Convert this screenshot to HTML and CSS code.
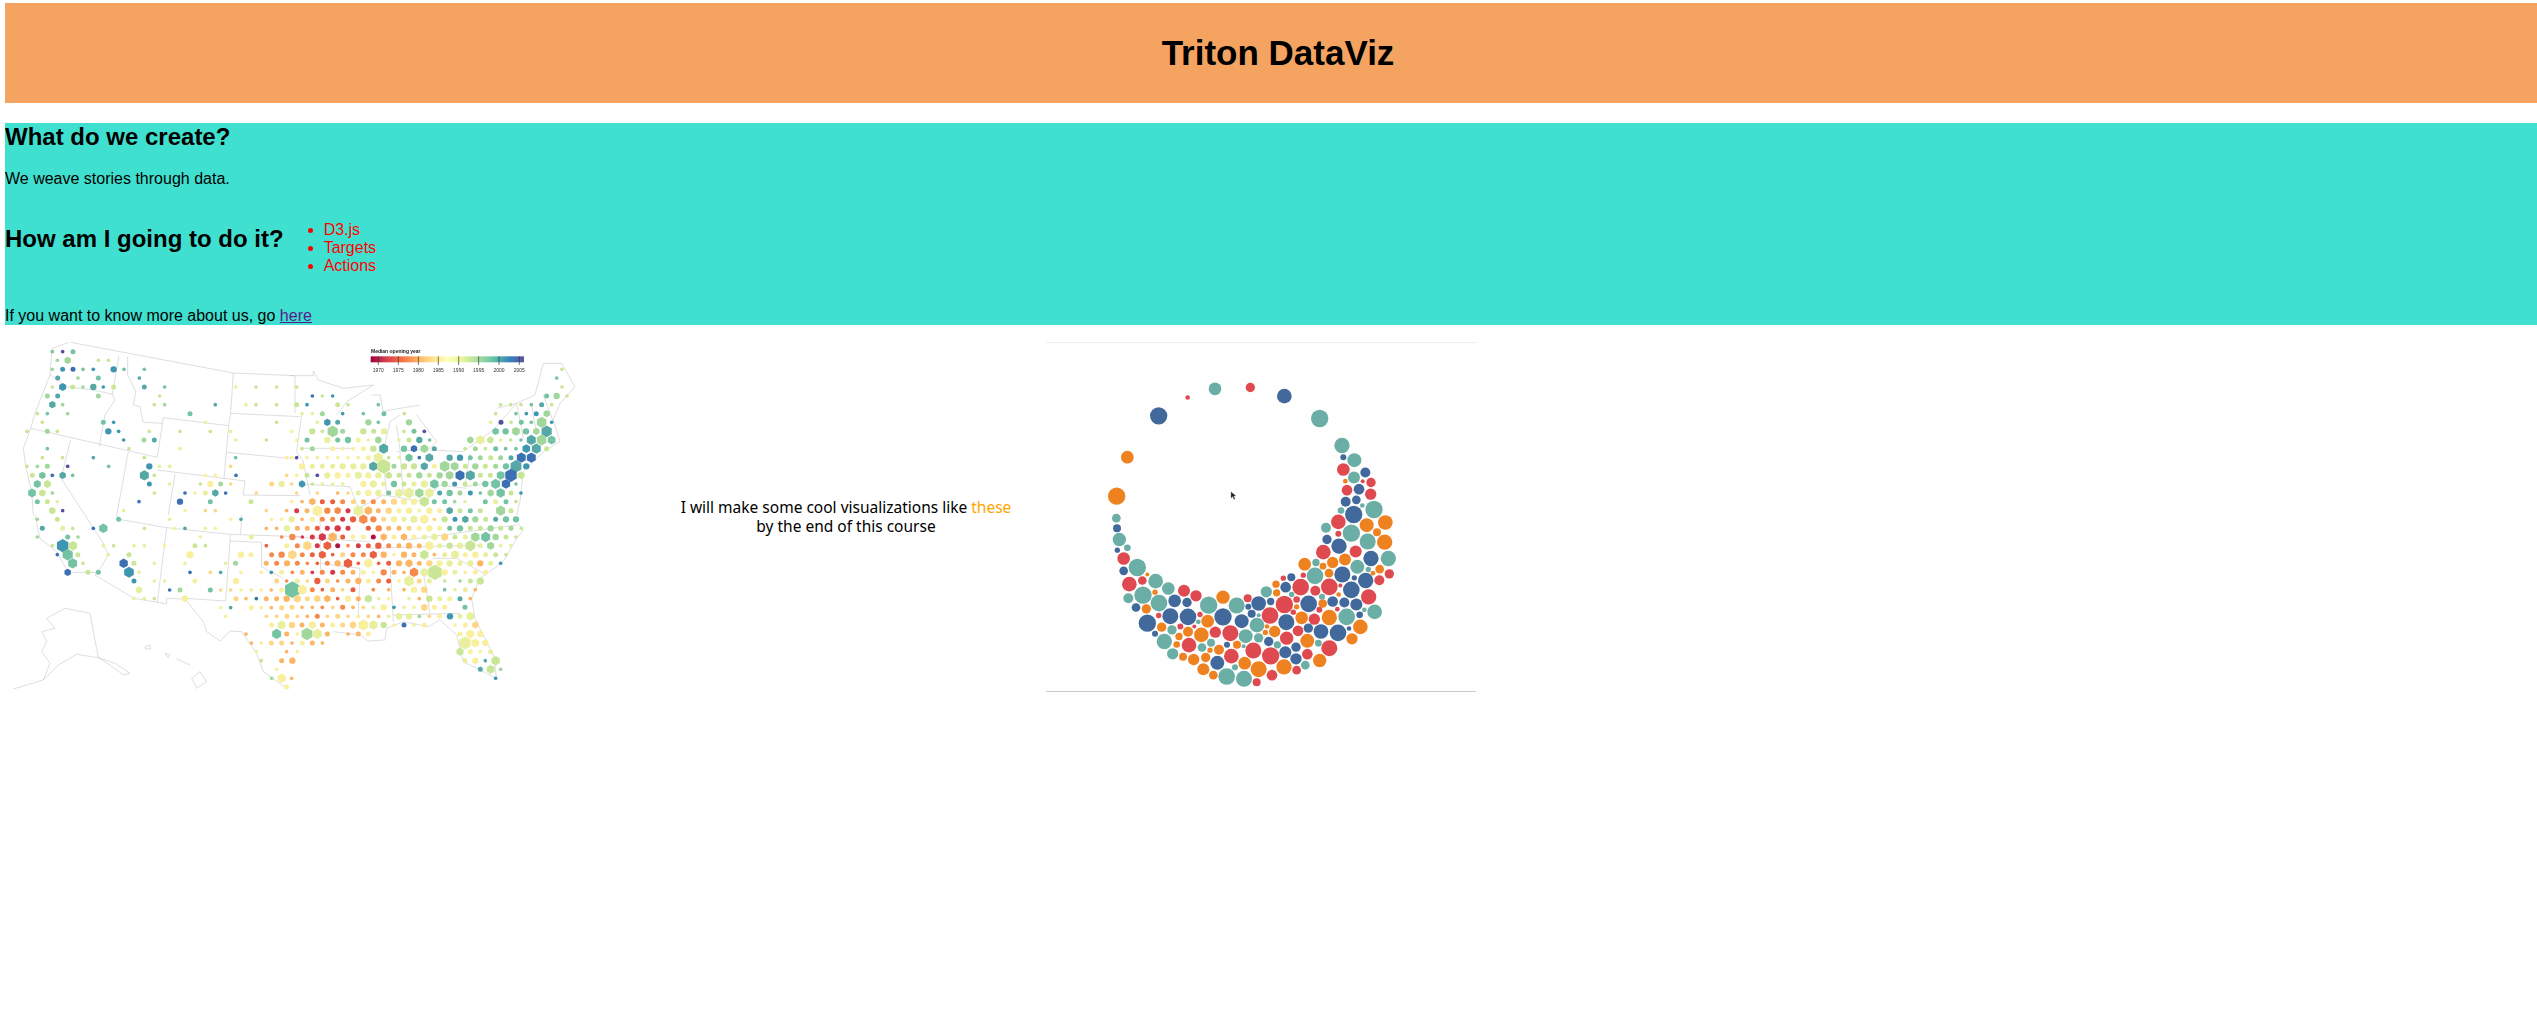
FILE: index.html
```html
<!DOCTYPE html>
<html lang="en">
<head>
<meta charset="utf-8">
<title>Triton DataViz</title>
<link rel="stylesheet" href="styles.css">
</head>
<body>
<header class="banner"><h1 class="banner-title">Triton DataViz</h1></header>
<section class="intro">
  <h2 class="intro-heading intro-heading-first">What do we create?</h2>
  <p class="intro-text intro-lead">We weave stories through data.</p>
  <div class="plan">
    <h2 class="intro-heading">How am I going to do it?</h2>
    <ul class="plan-list">
      <li>D3.js</li>
      <li>Targets</li>
      <li>Actions</li>
    </ul>
  </div>
  <p class="intro-text intro-last">If you want to know more about us, go <a class="intro-link" href="#">here</a></p>
</section>
<section class="gallery">
  <svg class="map" viewBox="5 342 641 350" xmlns="http://www.w3.org/2000/svg">
    <defs>
      <linearGradient id="spectral">
        <stop offset="0" stop-color="#9e0142"/><stop offset=".1" stop-color="#d53e4f"/><stop offset=".2" stop-color="#f46d43"/><stop offset=".3" stop-color="#fdae61"/><stop offset=".4" stop-color="#fee08b"/><stop offset=".5" stop-color="#ffffbf"/><stop offset=".6" stop-color="#e6f598"/><stop offset=".7" stop-color="#abdda4"/><stop offset=".8" stop-color="#66c2a5"/><stop offset=".9" stop-color="#3288bd"/><stop offset="1" stop-color="#5e4fa2"/>
      </linearGradient>
    </defs>
    <g id="q1" transform="translate(0 335) scale(.3333)">
      <path class="border" d="M212 22L700 114L885 122M205 22L157 40L152 90L150 120L105 235L92 280L70 340L78 400L95 470L100 540M150 118L200 155L280 165L337 178M357 62L337 178L345 195L315 240L310 265L298 335M92 280L472 367M383 65L383 120L408 170L400 210L420 215L430 262L487 265M490 248L472 367M490 248L686 272L672 432M472 405L735 438L730 480L900 482M700 114L692 235L686 272M692 235L900 245M680 352L890 372M212 315L183 430L255 540M385 350L350 540M525 418L505 540M885 122L885 235"/>
    </g>
    <g id="q2" transform="translate(290 335) scale(.3333)">
      <path class="border" d="M0 122L70 122L70 108L85 135L160 160L250 150L170 200L140 240M245 180L270 180L280 230L300 225L390 210M330 240L300 260L280 350M320 270L330 345M320 350L420 340L440 320L410 280L380 240M420 345L520 350L610 285L680 205L735 180L760 85L815 85L855 155L810 205L790 255L810 320L760 350L700 410L690 500L680 540M35 240L20 350L40 380L60 480M30 340L190 340M40 448L180 455M280 380L290 470M330 350L340 480M540 355L525 455L680 430M620 220L680 205L700 310M725 210L740 300M760 180L790 260M180 455L205 520L280 480L340 490L400 500L450 450L530 460"/>
      <text class="legend-title" x="243" y="53">Median opening year</text>
      <rect x="242" y="64" width="460" height="18" fill="url(#spectral)"/>
      <path class="ticks" d="M265 64V90M325 64V90M385 64V90M445 64V90M506 64V90M566 64V90M627 64V90M688 64V90"/>
      <text class="legend-label" x="265" y="110">1970</text><text class="legend-label" x="325" y="110">1975</text><text class="legend-label" x="385" y="110">1980</text><text class="legend-label" x="445" y="110">1985</text><text class="legend-label" x="506" y="110">1990</text><text class="legend-label" x="566" y="110">1995</text><text class="legend-label" x="627" y="110">2000</text><text class="legend-label" x="688" y="110">2005</text>
    </g>
    <g id="q3" transform="translate(0 515) scale(.3333)">
      <path class="border" d="M255 0L310 85L325 120L295 170L285 180L402 250L472 262M105 0L120 70L170 110L205 172L295 172M350 0L357 13L500 38L690 58L900 65M500 38L472 262L500 267L500 250L555 252L610 320L620 350L660 378L690 348L725 350L770 415L790 470L860 520M690 58L690 78L785 82L785 155L850 190M690 78L677 258L555 250M725 0L722 58M40 522L130 495L175 450L230 418L295 428L345 445L390 475L370 480L330 450L295 428L270 295L195 280L140 310L165 340L125 350L140 380L125 410L150 445L130 495M575 490L600 470L620 500L590 520ZM495 415L510 420L505 428ZM530 432L570 450M435 395L450 390L452 402L437 402Z"/>
    </g>
    <g id="q4" transform="translate(290 515) scale(.3333)">
      <path class="border" d="M130 350L210 360L235 378L285 375L290 340L315 330L340 320L415 335L450 315L500 360L520 440L600 480L620 490L610 420L555 310L545 250L570 190L640 140L680 70L700 45L680 20M90 0L92 180M90 145L210 160L205 300M0 65L240 80M240 100L575 90M300 150L310 320M400 170L420 295M310 300L510 295M430 130L500 130L590 180M350 75L680 30"/>
    </g>
  </svg>
  <p class="caption">I will make some cool visualizations like <span class="caption-accent">these</span><br>by the end of this course</p>
  <svg class="bubbles" id="bubbles" viewBox="48 38 1290 1043" xmlns="http://www.w3.org/2000/svg">
    <path class="cursor" d="M603 484V503L608 498L612 507L615 505L611 497L617 496Z"/>
  </svg>
</section>
<script src="charts.js"></script>
</body>
</html>
```

FILE: styles.css
```css
html, body { height: 100%; }
body {
  margin: 0;
  padding: 3px 0 0 5px;
  box-sizing: border-box;
  overflow: hidden;
  background: #fff;
  color: #000;
  font-family: "Liberation Sans", Arial, sans-serif;
  font-size: 16px;
}
.banner {
  height: 100px;
  margin-bottom: 20px;
  padding-left: 14px;
  display: flex;
  align-items: center;
  justify-content: center;
  background: #f4a460;
}
.banner-title { margin: 0; font-size: 35px; line-height: 40px; }
.intro { background: #40e0d0; height: 202px; }
.intro-heading { margin: 20px 0; font-size: 24px; line-height: 27px; }
.intro-heading-first { margin-top: 0; }
.intro-text { margin: 16px 0; line-height: 18px; }
.intro-lead { margin-bottom: 17px; }
.intro-last { margin-bottom: 0; }
.intro-link { color: #551a8b; }
.plan { display: flex; }
.plan-list { margin: 16px 0; padding-left: 40px; color: #f00; line-height: 18px; }
.gallery { display: flex; align-items: center; margin-top: 17px; }
.map { display: block; width: 641px; height: 350px; flex: none; filter: blur(.3px); }
.border { fill: none; stroke: #bdbdbd; stroke-width: 1.5; stroke-linejoin: round; }
.ticks { stroke: #333; stroke-width: 2; fill: none; }
.legend-title { font: bold 15px "Liberation Sans", sans-serif; fill: #222; }
.legend-label { font: 15px "Liberation Sans", sans-serif; fill: #333; text-anchor: middle; }
.dot { fill: none; stroke-linecap: round; }
.caption {
  width: 400px;
  margin: 0;
  flex: none;
  text-align: center;
  font-family: "Noto Sans", sans-serif;
  font-size: 15.5px;
  line-height: 19px;
}
.caption-accent { color: #ffa500; }
.bubbles {
  display: block;
  width: 430px;
  height: 348px;
  flex: none;
  background: #fefefe;
  border-top: 1px solid #eee;
  border-bottom: 1px solid #ccc;
  filter: blur(.25px);
}
.bubble-t { fill: #6aaea6; }
.bubble-b { fill: #41699c; }
.bubble-r { fill: #de4a50; }
.bubble-o { fill: #ef8220; }
.cursor { fill: #222; stroke: #888; stroke-width: 1; }
```

FILE: charts.js
```js
var NS = "http://www.w3.org/2000/svg";
var COLORS = {a:"#b2123f",b:"#d8384a",c:"#ea5f3f",d:"#f68a4a",e:"#fbb565",f:"#fdd686",g:"#f8ef9f",h:"#e8f0a0",i:"#c8e696",j:"#a1d79b",k:"#74c3a2",l:"#55a8a6",m:"#3f96b0",n:"#3b71b2",o:"#544ea0"};
var WIDTHS = {s:11,m:15,l:19};

var MAP = {
  q1: {
    50:"157sk 188so 219mk",76:"203h10j 172sj 295si 325si",
    103:"157sj 188mm 219mn 249sk 280sm 341lm 372sk 433sk",129:"173ml 234sj 295mk 418sl",
    156:"157si 188h11m 218mi 249sj 280ll 310sm 341mi 433ml 494sk 707sh 768si 830si",183:"142mj 173ml 295mj 479si",
    209:"157h10l 188sj 463si 494sj 646sl 738sh 768si 830si",236:"112si 142sk 203sj 570mk",
    262:"127si 310mk 341sm 616sh 830si",289:"81si 142mj 172si 325lm 356sm 448si 540si 631si 692sh",
    315:"371sm 432mj 463ml 707sh 799si",341:"142sk 387si 540sh",368:"127si 188si 280sl 433si 707sk 860sg",
    394:"81si 112sj 142mj 203so 326sk 448lm 478sh 509sh 692sf",421:"97mi 127h10k 157sn 188h10l 218sk 433h14l 463si 616sg 646sg 708sn 860sf",
    447:"112h11k 142h11i 448mm 509sh 601si 631lg 662mj 692sf 815mf 845lh",474:"96h12k 127h10i 157sj 463si 555sn 585sg 616mh 646h10l 677sn 769sf",
    500:"112mk 142mi 172sh 417sn 540ln 631mk 753mi",527:"157h10i 188so 371sh 555sg 616sf 646sf 799sf 860se"
  },
  q2: {
    103:"816si",129:"800sk",156:"20si 816si",183:"67sn 97si 128sm 770mk 800lj 831si",
    209:"20mi 51sm 143mi 174si 265sk 632si 662si 693si 724sk 755ml 785si",
    236:"36sh 67sh 97mj 158sm 220sk 282mk 343si 617si 678sk 709sm 739mm 770h10j",
    262:"82sh 112h10m 143ml 235lj 265sk 357lj 602sh 633mo 663si 694mk 724sk 755h15j 785sm",
    289:"5sg 67li 97si 128h16j 158mj 220li 251mi 282lh 342si 372mk 403so 617h10k 647lk 678h12j 708lk 739h10j 770h16l",
    315:"20sg 51mk 112lh 143mk 174lk 205mg 235sg 265h10j 327sh 357mi 388ll 419sk 541h10j 571h13h 601h10i 632sh 662si 693sk 724h14l 755h15j 785h12k",
    341:"36si 67mj 128mg 158sg 190sg 220mg 250li 281h14l 342lk 372h10n 403h12j 433ml 525si 556mj 586si 617mk 647sk 678sk 709h12m 739h14l 770mi",
    368:"5sg 20so 51sg 82sh 112sg 143sg 174sg 205sg 235mg 265h14h 296si 327sh 357h11k 388sn 418h12l 479ll 510lm 541mk 571mj 602mi 632mj 663ml 694h14n 724h14n",
    394:"36lg 67mh 97mh 128mh 158lh 190lh 220lh 250h13l 281h20i 312mj 342li 372li 403h11l 433mg 464h15j 494h12j 526mi 556lj 586mi 617mj 648lk 678h17l 709lm",
    421:"20sg 51mi 82so 112lh 143lg 174mg 205h11h 235lg 265lh 296h10i 327mi 357mi 388lj 418mi 449lj 479h12j 510h14n 541h14l 571mi 601mi 632h12k 663h18n 693h11i",
    447:"5sf 36h10m 67si 97sh 128sh 158sh 220lg 250h11h 281mh 312lk 342mi 372mh 403h11h 433h13k 464lj 494mm 525mi 556mj 586lk 617h14k 648h13n 678sk",
    474:"20sf 82sf 143se 174sf 205mh 235lg 265lh 296mk 327h12h 357h15h 388h13j 418h13h 449ml 479lk 510mj 541mm 571sk 602h10j 632h13k 663mi 693sm",
    500:"5sg 36se 67h10e 97mc 128mc 158md 190mf 220me 250md 281me 312lf 342lg 372lg 403h14i 433mk 464mk 494sj 525sh 586mk 617mh 648mk 678si",
    527:"20mb 51me 82h15g 112ld 143h10d 174mb 205h15h 235h12e 265me 296lf 327mg 357lg 388sg 418lg 449mg 479h10l 510mi 541mk 571mi 632h14j 663mi"
  },
  q3: {
    13:"112sj 172mi 356mk 509sh 692sg 723sl 815sg 845sg",40:"127ml 188mh 218si 280sn 310h13k 433si 524sg 555sl 616sg 646sg 799se 830se 861lh",
    66:"112sj 203mk 234sj 601sg 754mh 845sd",92:"157si 188h18m 219h13i 310sh 341si 402sh 433sh 494sg 585mi 616si 799sc 860mg",
    119:"172sn 203h16k 234mi 325sh 387mi 570h11g 723lg 753mg 815md 845ld",145:"218h14k 249si 371h13n 402mi 463sh 555sh 677sh 707mj 799me 830md 861le",
    172:"203h10n 264mi 295mk 387h15m 417sh 570sn 631sf 662sl 723sg 784sg 814sm 845mg",198:"402mm 463sh 494sh 585mg 708lg 830mf 860sd",
    225:"417h10h 509sn 540mj 631mk 662sf 692sf 723sg 754sh 784sg 814se 845mg",251:"402sh 433sh 463si 555h10g 708mf 738se 769sn 799me 830me 860le",
    278:"662sg 692sl 754mg 784sg 814se 845mf",304:"677sg 799sf 830sf 861mf",330:"815mg 845h12h",357:"738se 830h14k 860me",
    384:"754se 784sg 814mf 845mf",410:"769sg 860se",437:"784si 845me",463:"830sg",490:"815sj 845h13g",516:"860mg"
  },
  q4: {
    13:"5lh 36se 67mg 97md 128md 158mb 189lc 220h13d 250ld 281mf 312lg 342mh 372h11h 403h13g 433sf 464li 495mm 526h10l 556lj 587mi 617ml 648lk 678lk",
    40:"22me 52me 82mc 112mb 143lb 174mb 235mc 266ld 296me 327me 357mf 388mg 418lg 449mg 479mk 510lk 541mi 571mi 602lj 632mi 663mj 694si",
    66:"7ld 37sb 67mb 97h11b 128h13e 158mc 189mg 220mg 250ma 281h10e 312mg 342h10e 372mg 403mh 433h10h 464h11f 495mi 526mh 556h13j 587h14k 617lj 648mi 678si",
    92:"22md 52h13f 82mb 112h12c 143ma 174sd 205mb 235mc 265lc 296md 327me 357le 388me 418h13g 449mh 479li 510lh 541h15i 571mh 602h11j 632sh 663sh",
    119:"7h13f 37md 67mc 97h11c 128sc 158mf 189md 220md 250h11c 281le 312sg 342le 372me 403h13i 433se 464mh 495h12h 526mg 556lg 587mh 617mi 648si",
    145:"22md 52sd 82sc 112md 143le 174h13c 205sc 235h13g 266sc 296mc 327le 357h11e 388me 418lf 449lg 479lh 510mh 541lh 571le 602mh 632sm",
    172:"7sd 37me 67sb 97md 128mb 158md 189me 220mg 250sg 281ld 312me 342se 372h13d 403h12h 435h21i 464lg 495mh 526sg 556mg 587mg",
    198:"22mh 52sf 82lc 112mf 143sd 174me 205le 235mg 266md 296mc 327sg 357h15h 388mf 418mh 464si 510sj 541mi 571h11i",
    224:"7h23k 37h14g 67md 97sc 128me 158sf 189mc 250sd 296se 342se 372lg 403lf 464sk 495sh 526mh 556se",
    251:"22h11f 52mf 82h10f 112h10e 143sc 174lg 205me 235h11i 266sh 296sg 357sh 388se 418li 449mh 479mg 510ml 541se",
    277:"6mf 36se 67se 97sd 128sf 158md 189se 220sf 250sh 281lg 312sm 342sh 372sg 403h10f 433mg 464mg 525mk",
    304:"22sf 52se 82md 112sf 143mf 174sf 205sg 235sf 266se 296sh 327h10h 357lh 388sj 418sf 449mg 480lm 510mh 541h12h",
    330:"6lf 36me 67h11g 97me 128mg 158mf 189h10f 220h15g 250h13h 281li 312sg 342mn 372sh 403mg 495sg 526mg 556h10f",
    357:"22sg 51h17j 82h14h 112me 174se 205me 235mg 510mg 541h12g 571lg",384:"6se 37mg 67me 97se 525h18h 556h12g 586lg",
    410:"22sg 510h11i 541mg 571sg 602mh",437:"7le 525mh 556lg 586sl 617h13i",463:"571ml 602h12i 632sj",490:"5se 617sm"
  }
};

var BUBBLES = "555 175 19t,661 171 14r,763 197 22b,869 264 26t,473 201 7r,386 256 26b,292 380 19o,260 497 26o,936 345 23t,940 380 9b,973 389 21t,940 417 19r,1006 426 15b,972 441 18t,946 452 7o,998 452 6r,1023 456 14r,951 479 16r,987 476 16b,1022 491 17r,947 514 15b,979 508 13b,997 525 7t,933 540 10t,1032 537 26t,971 552 26b,925 574 22r,1010 584 21o,1066 576 22o,888 592 15t,1041 605 12o,925 610 9r,964 608 26t,1013 633 24t,1064 635 23o,891 627 14b,927 647 23b,880 665 22r,977 663 18r,1023 684 23b,1075 684 23t,824 701 19o,858 696 11t,879 707 10o,908 696 17o,945 687 18o,982 709 21t,1015 717 8t,1049 716 13o,1029 728 7o,1078 730 14r,855 736 25t,820 734 8r,897 728 13o,937 732 24b,973 742 8b,1007 750 23b,1048 749 15r,760 743 8r,784 740 12b,738 761 11o,767 770 16b,812 770 25r,856 781 15r,898 769 25r,931 765 6r,964 778 25b,926 792 7o,1016 799 23r,709 784 17t,740 787 11o,785 792 8t,876 799 9t,800 807 10r,836 820 25b,878 819 13o,908 813 16b,943 816 15b,979 822 18b,763 822 26r,800 829 8o,868 838 9r,922 836 7r,1003 838 7t,1034 844 22t,790 845 8r,720 855 25r,815 862 19o,853 866 17r,898 861 23o,950 859 25t,989 853 10b,653 803 12r,655 829 9b,686 819 22b,722 813 11b,620 825 24t,579 800 20o,536 824 26t,498 796 17r,462 781 18r,415 774 19t,377 752 22t,337 750 13r,352 732 6o,322 711 26t,281 684 19r,281 721 13b,292 652 10t,262 659 8b,268 627 20t,261 593 12b,259 563 13t,298 761 22r,375 785 8o,339 794 26t,295 803 15t,318 831 13b,349 835 14o,387 818 25t,434 811 19b,471 816 14b,386 855 8r,421 857 24b,474 859 25b,510 852 8r,533 872 19o,505 874 7t,579 859 26b,635 872 21b,665 850 12b,686 854 6t,681 884 22t,769 875 24b,352 878 26b,395 890 14o,426 898 14t,451 888 9r,493 888 6r,474 904 15o,514 913 22o,556 905 17r,601 908 24r,647 917 21t,711 888 7o,706 906 8o,734 903 17o,835 893 14b,804 901 16r,873 903 22b,924 907 25b,957 894 7b,991 889 22o,966 925 17o,375 910 9b,447 918 11o,403 933 23t,440 942 10o,477 944 22r,516 951 13t,543 937 12t,686 922 14t,770 923 20r,832 931 21o,865 938 10t,898 953 24r,716 933 14b,742 943 11t,591 943 9b,621 943 12o,641 947 6t,540 959 8o,567 958 15o,670 960 24r,798 950 14b,766 965 18b,722 976 26r,832 971 16r,428 970 17t,459 979 12o,491 987 17o,527 981 14o,604 977 22r,562 997 21b,644 998 19o,798 985 17b,869 990 20o,762 1009 23o,826 1004 13t,686 1016 24o,615 1010 9t,520 1016 18o,550 1034 13o,590 1038 25t,642 1045 24t,726 1034 16r,800 1019 13r,680 1055 12r";

function drawMap() {
  Object.keys(MAP).forEach(function (q) {
    var group = document.getElementById(q);
    Object.keys(MAP[q]).forEach(function (y) {
      MAP[q][y].split(" ").forEach(function (token) {
        var m = token.match(/^(\d+)([sml]|h\d+)([a-o])$/);
        var el = document.createElementNS(NS, "path");
        var color = COLORS[m[3]];
        if (m[2].charAt(0) === "h") {
          el.setAttribute("d", hexPath(+m[1], +y, +m[2].slice(1) * 1.1));
          el.setAttribute("fill", color);
        } else {
          el.setAttribute("class", "dot");
          el.setAttribute("d", "M" + m[1] + " " + y + "h0");
          el.setAttribute("stroke", color);
          el.setAttribute("stroke-width", WIDTHS[m[2]]);
        }
        group.appendChild(el);
      });
    });
  });
}

function hexPath(x, y, r) {
  var w = r * 0.87, h = r * 0.5;
  return "M" + x + " " + (y - r) + "L" + (x + w) + " " + (y - h) + "V" + (y + h) + "L" + x + " " + (y + r) + "L" + (x - w) + " " + (y + h) + "V" + (y - h) + "Z";
}

function drawBubbles() {
  var svg = document.getElementById("bubbles");
  var cursor = svg.firstElementChild;
  BUBBLES.split(",").forEach(function (item) {
    var p = item.split(" ");
    var c = document.createElementNS(NS, "circle");
    c.setAttribute("cx", p[0]);
    c.setAttribute("cy", p[1]);
    c.setAttribute("r", parseInt(p[2], 10));
    c.setAttribute("class", "bubble-" + p[2].slice(-1));
    svg.insertBefore(c, cursor);
  });
}

drawMap();
drawBubbles();
```
